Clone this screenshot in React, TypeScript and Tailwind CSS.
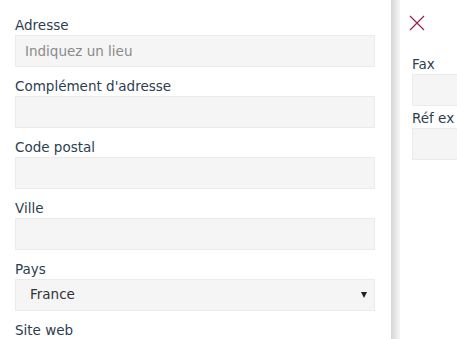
import React from 'react';

const labelCls = 'block text-[13.5px] leading-[17px] text-[#2c3e50]';
const inputCls =
  'block w-full h-8 border border-[#ebebeb] bg-[#f5f5f5] px-[9px] text-[13.5px] text-[#333] outline-none placeholder:text-[#8a8a8a]';

const Field: React.FC<{ label: string; placeholder?: string }> = ({ label, placeholder }) => (
  <div className="mb-[11px]">
    <label className={labelCls}>{label}</label>
    <input className={`${inputCls} mt-[1px]`} placeholder={placeholder} />
  </div>
);

export default function App() {
  return (
    <div
      className="flex h-[339px] w-[457px] overflow-hidden bg-white"
      style={{ fontFamily: '"DejaVu Sans", Verdana, sans-serif' }}
    >
      {/* main form */}
      <div className="w-[391px] shrink-0 pl-[15px] pr-[16px] pt-[17px]">
        <Field label="Adresse" placeholder="Indiquez un lieu" />
        <Field label="Complément d'adresse" />
        <Field label="Code postal" />
        <Field label="Ville" />
        <div className="mb-[11px]">
          <label className={labelCls}>Pays</label>
          <div className="relative mt-[1px] h-8 border border-[#ebebeb] bg-[#f5f5f5]">
            <span className="absolute left-[14px] top-[6px] text-[13.5px] leading-[17px] text-[#333]">France</span>
            <span className="absolute right-[7px] top-[12px] h-0 w-0 border-x-[3.5px] border-t-[6px] border-x-transparent border-t-[#222]" />
          </div>
        </div>
        <label className={labelCls}>Site web</label>
      </div>

      {/* divider shadow */}
      <div className="w-[9px] shrink-0 bg-gradient-to-r from-[#d6d6d6] via-[#e6e6e6] to-[#f7f7f7]" />

      {/* side panel */}
      <div className="flex-1 overflow-hidden pl-[12px]">
        <svg width="16" height="16" viewBox="0 0 16 16" className="ml-[-3px] mt-[15px]">
          <path d="M1 1 L15 15 M15 1 L1 15" stroke="#9c1f4c" strokeWidth="1.2" fill="none" />
        </svg>
        <div className="mt-[25px] w-[300px]">
          <label className={labelCls}>Fax</label>
          <input className={`${inputCls} mt-[1px]`} />
          <label className={`${labelCls} mt-[4px]`}>Réf ex</label>
          <input className={`${inputCls} mt-[1px]`} />
        </div>
      </div>
    </div>
  );
}
